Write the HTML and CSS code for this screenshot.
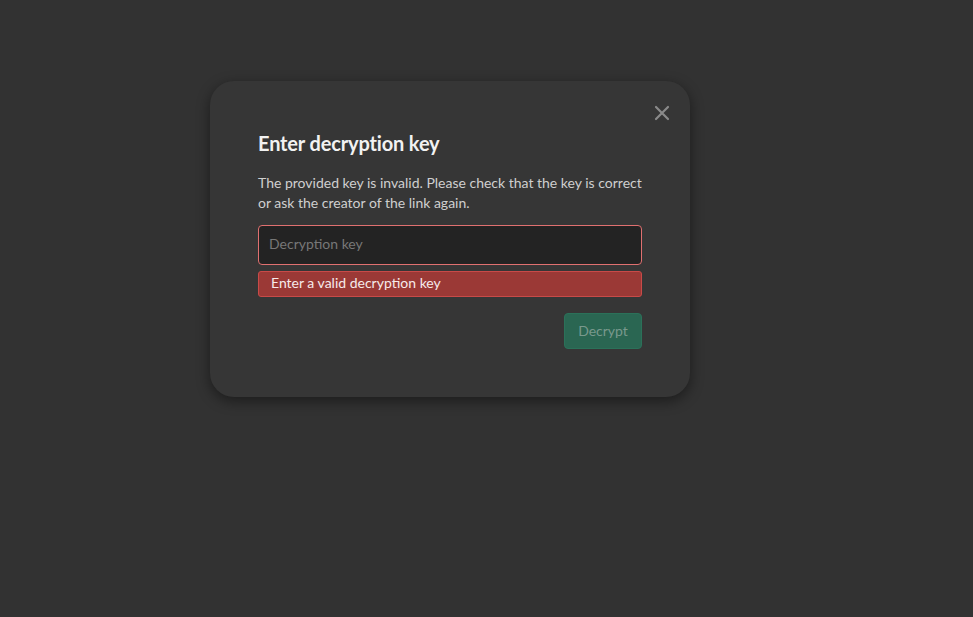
FILE: index.html
```html
<!DOCTYPE html>
<html lang="en">
<head>
    <meta charset="UTF-8">
    <meta name="viewport" content="width=device-width, initial-scale=1.0">
    <title>Decrypt</title>
    <link rel="stylesheet" href="styles.css">
</head>
<body>
    <div class="backdrop">
        <div class="dialog">
            <button class="close-button" aria-label="Close">
                <svg width="16" height="16" viewBox="0 0 16 16">
                    <path d="M2 2 L14 14 M14 2 L2 14" stroke="#8a8a8a" stroke-width="2.2" stroke-linecap="round"/>
                </svg>
            </button>
            <h2 class="dialog-title">Enter decryption key</h2>
            <p class="dialog-text">The provided key is invalid. Please check that the key is correct or ask the creator of the link again.</p>
            <input class="key-input" type="text" placeholder="Decryption key">
            <div class="error-box">Enter a valid decryption key</div>
            <div class="actions">
                <button class="decrypt-button" disabled>Decrypt</button>
            </div>
        </div>
    </div>
</body>
</html>
```

FILE: styles.css
```css
html, body {
    margin: 0;
    height: 100%;
}

body {
    background-color: #323232;
    font-family: Lato, "Open Sans", sans-serif;
}

.backdrop {
    padding: 81px 0 0 210px;
}

.dialog {
    position: relative;
    width: 384px;
    padding: 48px;
    background-color: #363636;
    border-radius: 24px;
    box-shadow: 0 4px 14px rgba(0, 0, 0, 0.45);
}

.close-button {
    position: absolute;
    top: 24px;
    right: 20px;
    width: 16px;
    height: 16px;
    padding: 0;
    border: none;
    background: none;
    cursor: pointer;
}

.close-button svg {
    display: block;
}

.dialog-title {
    margin: 0 0 16px;
    font-size: 20px;
    line-height: 28px;
    font-weight: 700;
    letter-spacing: -0.15px;
    color: #f2f2f2;
}

.dialog-text {
    margin: 0 0 12px;
    font-size: 14px;
    line-height: 20px;
    color: #cfcfcf;
}

.key-input {
    display: block;
    box-sizing: border-box;
    width: 100%;
    height: 40px;
    padding: 0 10px 4px;
    border: 1px solid #e07070;
    border-radius: 4px;
    background-color: #232323;
    color: #eee;
    font-family: inherit;
    font-size: 14px;
    outline: none;
}

.key-input::placeholder {
    color: #777;
}

.error-box {
    box-sizing: border-box;
    height: 26px;
    margin-top: 6px;
    padding: 0 12px;
    border: 1px solid #c94a48;
    border-radius: 3px;
    background-color: #9b3936;
    color: #f6eaea;
    font-size: 14px;
    line-height: 22px;
}

.actions {
    display: flex;
    justify-content: flex-end;
    margin-top: 16px;
}

.decrypt-button {
    width: 78px;
    height: 36px;
    padding: 0 0 2px;
    border: 1px solid #2b7159;
    border-radius: 4px;
    background-color: #2a6652;
    color: #79998d;
    font-family: inherit;
    font-size: 14px;
}
```
